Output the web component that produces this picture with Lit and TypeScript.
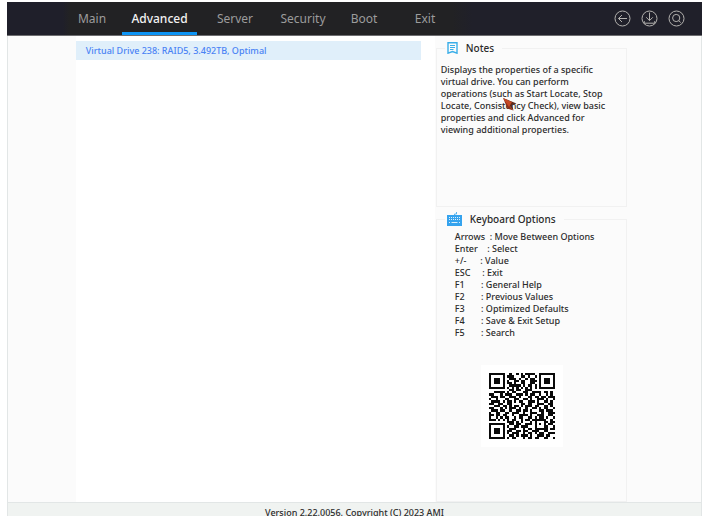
import { LitElement, html, svg, css } from "lit";
import { customElement, state } from "lit/decorators.js";

const TABS = ["Main", "Advanced", "Server", "Security", "Boot", "Exit"];

const KEYS: [string, string][] = [
  ["Arrows  ", "Move Between Options"],
  ["Enter    ", "Select"],
  ["+/-      ", "Value"],
  ["ESC     ", "Exit"],
  ["F1       ", "General Help"],
  ["F2       ", "Previous Values"],
  ["F3       ", "Optimized Defaults"],
  ["F4       ", "Save & Exit Setup"],
  ["F5       ", "Search"],
];

const QR = [
  "#######..#..#.#.####..#######",
  "#.....#.###...##.#..#.#.....#",
  "#.###.#..###.#..#.##..#.###.#",
  "#.###.#.#..##.##..###.#.###.#",
  "#.###.#.##.#..##..##..#.###.#",
  "#.....#..#####.#.##.#.#.....#",
  "#######.#.#.#.#.#.#.#.#######",
  ".........##.##..###..........",
  "..#####.#.##...##..####.##.#.",
  "##...#.###..###.#.##..#..#.#.",
  ".###.##..###.#...##.##.##.###",
  "#..#...##..##..##.#..###.#..#",
  ".####.#.##.#.##..###.#..##.#.",
  "##..##..##....##.##..###..##.",
  "..###.##.#.##.#.###.##..##.#.",
  "##...#.#.###.#..#..##.#.##..#",
  ".###.##..#..##.##.#...##.###.",
  "#..##..##.###..#..###..#..###",
  "##.##.##..#..####.#..###..##.",
  "#..#.#.##..#.##..##.#.##.#..#",
  "###.#.#.#.##..#.##.######..#.",
  "........###.#.#...#.#...##.##",
  "#######..##.##..###.#.#.#.##.",
  "#.....#.#..##.###...#...##..#",
  "#.###.#..###...#.##.######.##",
  "#.###.#.##..##.##..###..##...",
  "#.###.#.#.###..#.##.#.##..###",
  "#.....#..##.#.###.#..###.##..",
  "#######.#.##...#.##.##..##..#",
];

const actionIcon = (body: unknown) => svg`
  <svg class="round" viewBox="0 0 17 17" aria-hidden="true">
    <circle cx="8.5" cy="8.5" r="7.5" />${body}
  </svg>`;

const backIcon = actionIcon(svg`<path d="M13 8.5H4.5M8 5L4.5 8.5L8 12" />`);
const saveIcon = actionIcon(
  svg`<path d="M8.5 2.5V10.5M5.2 7.3L8.5 10.6L11.8 7.3M3.2 11V13.2H13.8V11" />`
);
const findIcon = actionIcon(
  svg`<circle cx="8.2" cy="8" r="3.6" /><path d="M10.8 10.6L12.6 12.6" />`
);

@customElement("app-root")
export class AppRoot extends LitElement {
  @state() private active = "Advanced";

  static styles = css`
    :host {
      display: block;
      height: 100vh;
      overflow: hidden;
      background: #fff;
      color: #2b2b2b;
      font: 500 9px/12px "Noto Sans", "Open Sans", sans-serif;
    }
    * {
      box-sizing: border-box;
    }
    button {
      margin: 0;
      border: 0;
      background: none;
      color: inherit;
      font: inherit;
      cursor: pointer;
    }
    .screen {
      display: flex;
      flex-direction: column;
      height: 100%;
      padding: 2px 9px 0 7px;
    }
    .bar {
      display: flex;
      justify-content: space-between;
      height: 34px;
      flex: none;
      padding: 0 17px 0 55px;
      border-bottom: 1px solid #6d6d70;
      background: linear-gradient(90deg, #1f1f2a 8%, #222224 9%, #222224 64%, #20202a 67%);
    }
    .tabs {
      display: grid;
      grid-template-columns: 60px 75px 76px 60px 62px 60px;
    }
    .tab {
      padding: 3px 0 0;
      border-bottom: 3px solid transparent;
      color: #9c9c9c;
      font-size: 12px;
      line-height: 24px;
      font-weight: 400;
      text-align: center;
    }
    .tab.on {
      border-color: #0c94f5;
      color: #f2f2f2;
      font-weight: 500;
    }
    .actions {
      display: flex;
      align-items: center;
      gap: 10px;
    }
    .action {
      padding: 0;
      display: flex;
    }
    .round {
      width: 17px;
      height: 17px;
      fill: none;
      stroke: #b3b1ae;
    }
    .body {
      flex: 1;
      min-height: 0;
      display: grid;
      grid-template-columns: 68fr 360fr 267fr;
      border: 1px solid #e2e6e6;
      border-top: 0;
      background: #fbfbfb;
    }
    .list {
      grid-column: 2;
      padding: 5px 14px 0 0;
      background: #fff;
    }
    .item {
      display: block;
      width: 100%;
      padding: 0 10px;
      background: #e0effa;
      color: #4a83f5;
      line-height: 19px;
      text-align: left;
    }
    .side {
      display: flex;
      flex-direction: column;
      gap: 4px;
      padding: 4px 74px 0 1px;
    }
    fieldset {
      min-width: 0;
      margin: 0;
      padding: 0 4px;
      border: 1px solid #f1f1f1;
    }
    legend {
      display: flex;
      align-items: center;
      gap: 8px;
      height: 16px;
      margin-left: 4px;
      padding: 0 8px 0 2px;
      font-size: 10px;
    }
    .notes {
      height: 167px;
    }
    .notes p {
      margin: 8px 8px 0 0;
    }
    .keys {
      flex: 1;
    }
    .note-icon {
      width: 11px;
      height: 12px;
    }
    .key-icon {
      width: 15px;
      height: 14px;
    }
    ul {
      margin: 4px 0 0;
      padding: 0 0 0 14px;
      list-style: none;
      white-space: pre;
    }
    .code {
      display: block;
      width: 82px;
      height: 82px;
      margin: 26px 0 0 40px;
      padding: 8px;
      background: #fff;
      fill: #0a0a0a;
    }
    .foot {
      flex: none;
      height: 13px;
      padding-top: 4px;
      border: 1px solid #e2e6e6;
      border-width: 0 1px;
      background: #f0f3f1;
      text-align: center;
    }
    .pointer {
      position: absolute;
      left: 503px;
      top: 98px;
      width: 14px;
      height: 13px;
    }
  `;

  render() {
    return html`
      <div class="screen">
        <header class="bar">
          <nav class="tabs">
            ${TABS.map(
              (t) => html`<button
                class="tab ${t === this.active ? "on" : ""}"
                @click=${() => (this.active = t)}
              >${t}</button>`
            )}
          </nav>
          <div class="actions">
            <button class="action" aria-label="Back">${backIcon}</button>
            <button class="action" aria-label="Save">${saveIcon}</button>
            <button class="action" aria-label="Search">${findIcon}</button>
          </div>
        </header>
        <main class="body">
          <section class="list">
            <button class="item">Virtual Drive 238: RAID5, 3.492TB, Optimal</button>
          </section>
          <aside class="side">
            <fieldset class="notes">
              <legend>
                <svg class="note-icon" viewBox="0 0 11 12" fill="none" stroke="#3aaee8" aria-hidden="true">
                  <path d="M1 .7H10V11.2L5.5 9.6L1 11.2Z" stroke-width="1.4" />
                  <path d="M3 3.5H8M3 5.5H8M3 7.5H6.5" />
                </svg>
                Notes
              </legend>
              <p>
                Displays the properties of a specific virtual drive. You can perform
                operations (such as Start Locate, Stop Locate, Consistency Check), view
                basic properties and click Advanced for viewing additional properties.
              </p>
            </fieldset>
            <fieldset class="keys">
              <legend>
                <svg class="key-icon" viewBox="0 0 15 14" aria-hidden="true">
                  <path d="M7.5 3.5V2H9.5V0" fill="none" stroke="#5bb6ef" />
                  <rect y="3" width="15" height="11" fill="#35a3ee" />
                  <path d="M2 5.5H13M2 7.5H13" stroke="#d9effc" stroke-dasharray="1 1" />
                  <path d="M2 10.5H3M4.5 10.5H10.5M12 10.5H13" stroke="#d9effc" />
                </svg>
                Keyboard Options
              </legend>
              <ul>${KEYS.map(([k, v]) => html`<li>${k}: ${v}</li>`)}</ul>
              <svg class="code" viewBox="0 0 29 29" shape-rendering="crispEdges" role="img" aria-label="QR code">
                ${QR.map((row, y) =>
                  [...row].map((c, x) =>
                    c === "#" ? svg`<rect x=${x} y=${y} width="1" height="1" />` : null
                  )
                )}
              </svg>
            </fieldset>
          </aside>
        </main>
        <footer class="foot">Version 2.22.0056. Copyright (C) 2023 AMI</footer>
      </div>
      <svg class="pointer" viewBox="0 0 14 13" aria-hidden="true">
        <path d="M0 0L13.5 5.5L9 7L10.5 12.5Z" fill="#5e2a1c" />
        <path d="M0 0L10.5 12.5L4.5 10.5Z" fill="#8f3018" />
        <path d="M0 0L9 4L6 9Z" fill="#c64a26" />
      </svg>
    `;
  }
}
